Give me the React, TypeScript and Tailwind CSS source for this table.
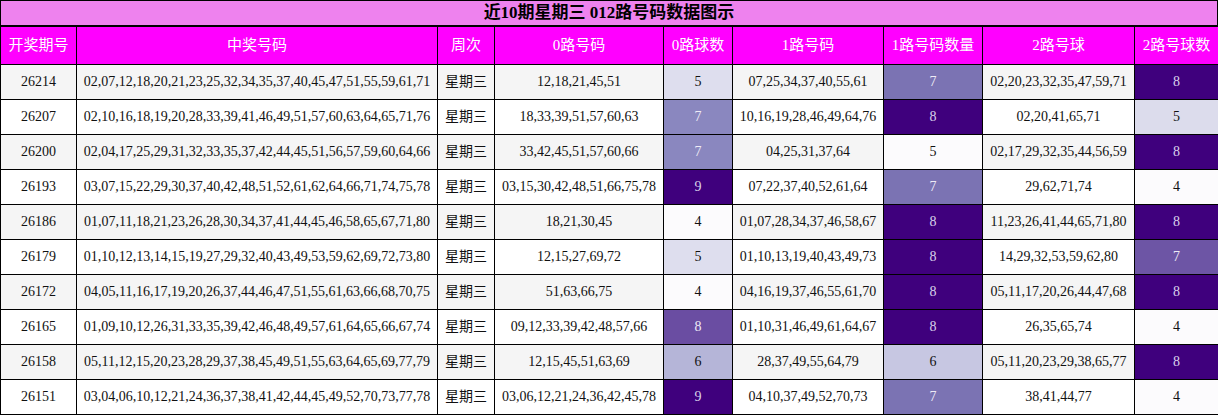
import React from 'react';

type Row = {
  issue: string;
  numbers: string;
  road0: string;
  count0: number;
  road1: string;
  count1: number;
  road2: string;
  count2: number;
};

const rows: Row[] = [
  { issue: '26214', numbers: '02,07,12,18,20,21,23,25,32,34,35,37,40,45,47,51,55,59,61,71', road0: '12,18,21,45,51', count0: 5, road1: '07,25,34,37,40,55,61', count1: 7, road2: '02,20,23,32,35,47,59,71', count2: 8 },
  { issue: '26207', numbers: '02,10,16,18,19,20,28,33,39,41,46,49,51,57,60,63,64,65,71,76', road0: '18,33,39,51,57,60,63', count0: 7, road1: '10,16,19,28,46,49,64,76', count1: 8, road2: '02,20,41,65,71', count2: 5 },
  { issue: '26200', numbers: '02,04,17,25,29,31,32,33,35,37,42,44,45,51,56,57,59,60,64,66', road0: '33,42,45,51,57,60,66', count0: 7, road1: '04,25,31,37,64', count1: 5, road2: '02,17,29,32,35,44,56,59', count2: 8 },
  { issue: '26193', numbers: '03,07,15,22,29,30,37,40,42,48,51,52,61,62,64,66,71,74,75,78', road0: '03,15,30,42,48,51,66,75,78', count0: 9, road1: '07,22,37,40,52,61,64', count1: 7, road2: '29,62,71,74', count2: 4 },
  { issue: '26186', numbers: '01,07,11,18,21,23,26,28,30,34,37,41,44,45,46,58,65,67,71,80', road0: '18,21,30,45', count0: 4, road1: '01,07,28,34,37,46,58,67', count1: 8, road2: '11,23,26,41,44,65,71,80', count2: 8 },
  { issue: '26179', numbers: '01,10,12,13,14,15,19,27,29,32,40,43,49,53,59,62,69,72,73,80', road0: '12,15,27,69,72', count0: 5, road1: '01,10,13,19,40,43,49,73', count1: 8, road2: '14,29,32,53,59,62,80', count2: 7 },
  { issue: '26172', numbers: '04,05,11,16,17,19,20,26,37,44,46,47,51,55,61,63,66,68,70,75', road0: '51,63,66,75', count0: 4, road1: '04,16,19,37,46,55,61,70', count1: 8, road2: '05,11,17,20,26,44,47,68', count2: 8 },
  { issue: '26165', numbers: '01,09,10,12,26,31,33,35,39,42,46,48,49,57,61,64,65,66,67,74', road0: '09,12,33,39,42,48,57,66', count0: 8, road1: '01,10,31,46,49,61,64,67', count1: 8, road2: '26,35,65,74', count2: 4 },
  { issue: '26158', numbers: '05,11,12,15,20,23,28,29,37,38,45,49,51,55,63,64,65,69,77,79', road0: '12,15,45,51,63,69', count0: 6, road1: '28,37,49,55,64,79', count1: 6, road2: '05,11,20,23,29,38,65,77', count2: 8 },
  { issue: '26151', numbers: '03,04,06,10,12,21,24,36,37,38,41,42,44,45,49,52,70,73,77,78', road0: '03,06,12,21,24,36,42,45,78', count0: 9, road1: '04,10,37,49,52,70,73', count1: 7, road2: '38,41,44,77', count2: 4 },
];

// heat colours, one scale per column (light -> dark purple)
const heat0: Record<number, string> = {
  4: 'bg-[#fcfbfd] text-[#111]',
  5: 'bg-[#dedeee] text-[#111]',
  6: 'bg-[#b5b5d8] text-[#111]',
  7: 'bg-[#8a87bf] text-[#eeebf6]',
  8: 'bg-[#6a4da2] text-[#eeebf6]',
  9: 'bg-[#3f007d] text-[#d9d2ea]',
};
const heat1: Record<number, string> = {
  5: 'bg-[#fcfbfd] text-[#111]',
  6: 'bg-[#c7c7e2] text-[#111]',
  7: 'bg-[#7b73b3] text-[#eeebf6]',
  8: 'bg-[#3f007d] text-[#d9d2ea]',
};
const heat2: Record<number, string> = {
  4: 'bg-[#fcfbfd] text-[#111]',
  5: 'bg-[#dcdcec] text-[#111]',
  7: 'bg-[#6d55a5] text-[#eeebf6]',
  8: 'bg-[#3f007d] text-[#d9d2ea]',
};

const headers = ['开奖期号', '中奖号码', '周次', '0路号码', '0路球数', '1路号码', '1路号码数量', '2路号球', '2路号球数'];
const widths = ['w-[76px]', 'w-[361px]', 'w-[57px]', 'w-[169px]', 'w-[69px]', 'w-[151px]', 'w-[99px]', 'w-[152px]', 'w-[84px]'];

const cell = 'border border-black text-center p-0';

export default function App() {
  return (
    <div className="w-[1218px] bg-white font-['Liberation_Serif','Noto_Sans_CJK_SC',serif] text-[#111]">
      <div className="flex h-[27px] items-center justify-center border-x border-t border-b-2 border-black bg-[#ee82ee] text-[17px] font-bold text-black">
        近10期星期三 012路号码数据图示
      </div>
      <table className="w-[1218px] table-fixed border-collapse">
        <colgroup>
          {widths.map((w) => (
            <col key={w} className={w} />
          ))}
        </colgroup>
        <thead>
          <tr className="h-[37px]">
            {headers.map((h) => (
              <th key={h} className={`${cell} border-t-0 bg-[#ff00ff] text-[15px] font-normal text-white`}>
                {h}
              </th>
            ))}
          </tr>
        </thead>
        <tbody className="text-[14px]">
          {rows.map((r, i) => (
            <tr key={r.issue} className={`h-[35px] ${i % 2 === 0 ? 'bg-[#f5f5f5]' : 'bg-white'}`}>
              <td className={cell}>{r.issue}</td>
              <td className={cell}>{r.numbers}</td>
              <td className={`${cell} text-[14px]`}>星期三</td>
              <td className={cell}>{r.road0}</td>
              <td className={`${cell} ${heat0[r.count0]}`}>{r.count0}</td>
              <td className={cell}>{r.road1}</td>
              <td className={`${cell} ${heat1[r.count1]}`}>{r.count1}</td>
              <td className={cell}>{r.road2}</td>
              <td className={`${cell} ${heat2[r.count2]}`}>{r.count2}</td>
            </tr>
          ))}
        </tbody>
      </table>
    </div>
  );
}
